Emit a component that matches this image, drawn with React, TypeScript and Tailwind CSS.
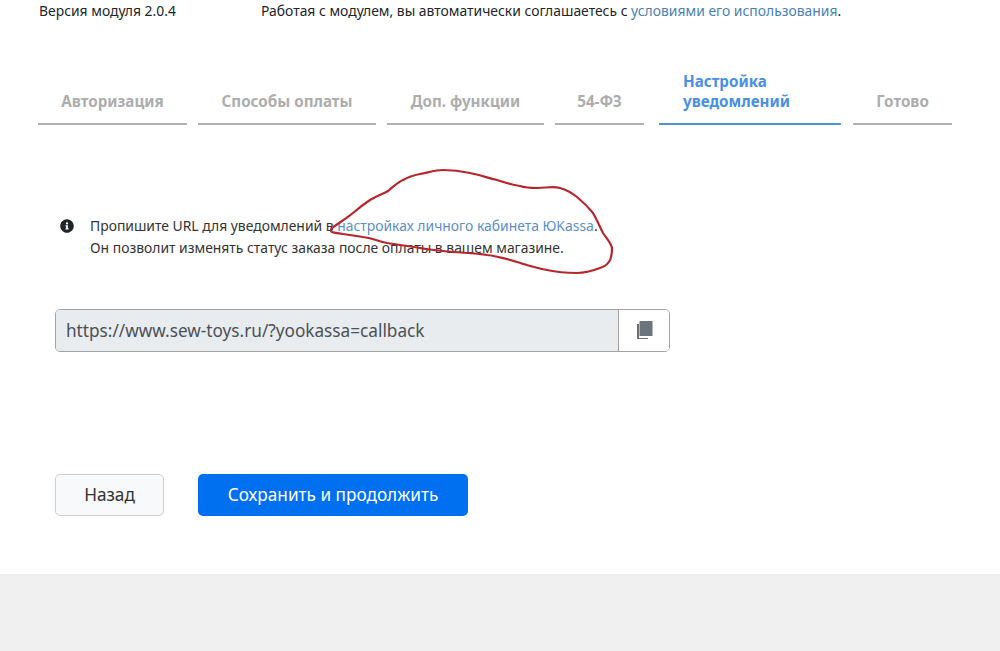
export default function App() {
  const tabs = [
    { label: "Авторизация", cls: "w-[149px] mr-[11px]" },
    { label: "Способы оплаты", cls: "w-[178px] mr-[11px]" },
    { label: "Доп. функции", cls: "w-[157px] mr-[11px]" },
    { label: "54-ФЗ", cls: "w-[89px] mr-[15px]" },
  ];
  return (
    <div className="w-[1000px] h-[651px] overflow-hidden bg-white flex flex-col font-['Noto_Sans','Open_Sans',sans-serif] relative">
      <div className="h-[574px] flex flex-col">
        <div className="flex h-[22px] items-center text-[13.9px] text-[#212529] pl-[39px]">
          <span className="w-[222px]">Версия модуля 2.0.4</span>
          <span>
            Работая с модулем, вы автоматически соглашаетесь с{" "}
            <span className="text-[#4a7fb5]">условиями его использования</span>.
          </span>
        </div>

        <div className="flex items-end mt-[48px] ml-[38px] h-[55px] text-[15.2px] font-bold leading-[20px]">
          {tabs.map((t) => (
            <div
              key={t.label}
              className={`${t.cls} h-[40px] pt-[6px] text-center text-[#adadad] border-b-2 border-[#b0b0b0]`}
            >
              {t.label}
            </div>
          ))}
          <div className="w-[182px] mr-[12px] pl-6 pb-[12px] text-[#4a90e2] border-b-2 border-[#4f94cf]">
            Настройка
            <br />
            уведомлений
          </div>
          <div className="w-[99px] h-[40px] pt-[6px] text-center text-[#adadad] border-b-2 border-[#b0b0b0]">
            Готово
          </div>
        </div>

        <div className="flex mt-[90px] ml-[60px] text-[13.9px] leading-[22px] text-[#333]">
          <svg viewBox="0 0 512 512" className="w-[14px] h-[14px] mt-[4px] mr-[16px] shrink-0" fill="#212529">
            <path d="M256 8C119 8 8 119 8 256s111 248 248 248 248-111 248-248S393 8 256 8zm0 110a42 42 0 1 1 0 84 42 42 0 0 1 0-84zm56 254c0 7-5 12-12 12h-88c-7 0-12-5-12-12v-24c0-7 5-12 12-12h12v-64h-12c-7 0-12-5-12-12v-24c0-7 5-12 12-12h64c7 0 12 5 12 12v100h12c7 0 12 5 12 12z" />
          </svg>
          <div>
            Пропишите URL для уведомлений в{" "}
            <span className="text-[#5b8fc7]">настройках личного кабинета ЮKassa</span>.
            <br />
            Он позволит изменять статус заказа после оплаты в вашем магазине.
          </div>
        </div>

        <div className="flex mt-[50px] ml-[55px] w-[615px] h-[43px] border border-[#a3a3a3] rounded-[5px] overflow-hidden">
          <div className="flex-1 bg-[#e9ecef] pl-[10px] flex items-center text-[17.2px] text-[#495057]">
            https://www.sew-toys.ru/?yookassa=callback
          </div>
          <div className="w-[51px] bg-white border-l border-[#a3a3a3] flex items-center justify-center pb-[2px]">
            <svg viewBox="0 0 17 20" className="w-[17px] h-[20px]">
              <rect x="1" y="4" width="11" height="15" fill="#6c7075" />
              <rect x="3" y="3" width="10" height="15" fill="#fff" />
              <rect x="3.5" y="1" width="13" height="15" fill="#6c757d" />
            </svg>
          </div>
        </div>

        <div className="flex mt-[122px] ml-[55px] text-[17.2px] gap-[34px]">
          <button className="w-[109px] h-[42px] bg-[#f8f9fa] border border-[#cfcfcf] rounded-[5px] text-[#333]">
            Назад
          </button>
          <button className="w-[270px] h-[42px] bg-[#0070f0] rounded-[5px] text-white">
            Сохранить и продолжить
          </button>
        </div>
      </div>
      <div className="flex-1 bg-[#f0f0f0]" />

      <svg className="absolute left-0 top-0 pointer-events-none" width="1000" height="651" fill="none">
        <path
          d="M332 228 C340 222 347 218 353 213 C360 207 364 204 370 200 C378 195 383 194 388 191 C394 186 398 182 403 180 C410 176 415 175 420 174 C430 172 436 170 443 170 C452 170 461 171 470 173 C480 175 488 178 497 180 C506 183 513 185 520 186 C526 188 531 188 537 188 C546 188 553 186 560 188 C567 190 572 193 577 197 C583 202 589 208 593 213 C597 220 600 227 603 233 C607 239 611 243 612 248 C612 255 611 260 608 263 C606 266 603 267 600 268 C592 271 585 273 577 273 C566 273 556 272 547 270 C536 268 527 265 517 262 C507 259 497 256 487 255 C476 253 465 253 453 252 C442 251 431 250 420 248 C409 246 398 245 387 243 C378 241 371 238 363 237 C356 236 350 235 343 234 C338 233 334 233 332 232 C330 230 331 229 332 228 Z"
          stroke="#b5272d"
          strokeWidth="2.2"
        />
      </svg>
    </div>
  );
}
